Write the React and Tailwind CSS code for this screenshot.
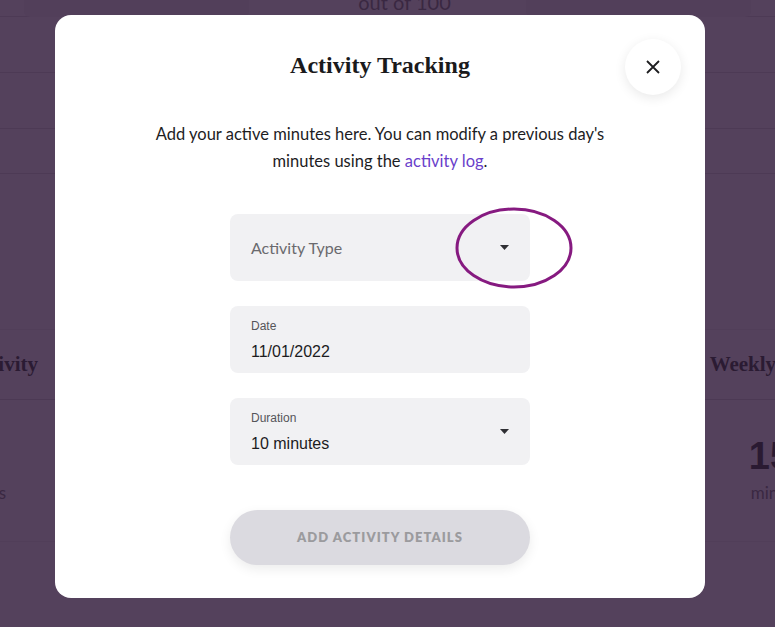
import React from 'react';

const serif = { fontFamily: '"Liberation Serif", serif' };

const Caret = () => (
  <svg width="9" height="5" viewBox="0 0 9 5" className="shrink-0">
    <path d="M0 0h9L4.5 5z" fill="#2f2f33" />
  </svg>
);

const BgCard = ({ title, value, unit }) => (
  <div className="w-[372px] shrink-0 h-[213px] border border-[#513e59] rounded-[10px] flex flex-col">
    <div className="h-[70px] flex items-center justify-center border-b border-[#4c3954]">
      <span className="text-[21px] font-bold text-[#2b1b33]" style={serif}>{title}</span>
    </div>
    <div className="flex flex-col items-center pt-[36px]">
      <span className="text-[38px] leading-[40px] font-semibold text-[#2a1a32]" style={{ fontFamily: '"Liberation Sans", sans-serif' }}>{value}</span>
      <span className="text-[17px] mt-[4px] text-[#3a2842]" style={{ fontFamily: 'Lato, sans-serif' }}>{unit}</span>
    </div>
  </div>
);

const Field = ({ label, value, caret, placeholder, children }) => (
  <div className="relative w-[300px] h-[67px] mx-auto rounded-[8px] bg-[#f1f1f3] flex items-center justify-between pl-[21px] pr-[21px]">
    {placeholder ? (
      <span className="text-[16px] text-[#6a6a6e]" style={{ fontFamily: 'Lato, sans-serif' }}>{placeholder}</span>
    ) : (
      <div className="flex flex-col self-start pt-[13px]" style={{ fontFamily: '"Liberation Sans", Arial, sans-serif' }}>
        <span className="text-[12px] leading-[14px] text-[#555559]">{label}</span>
        <span className="text-[16px] leading-[20px] mt-[9px] text-[#1c1c1e]">{value}</span>
      </div>
    )}
    {caret && <Caret />}
    {children}
  </div>
);

export default function App() {
  return (
    <div className="relative w-full h-[627px] overflow-hidden bg-[#54415c]">
      {/* dashboard behind the overlay */}
      <div className="flex flex-col">
        <div className="h-[17px] border-b border-[#4d3a55] flex justify-center">
          <div className="flex gap-[26px] -mt-[12px]">
            <div className="w-[225px] h-[29px] bg-[#523f5a] rounded-b-[6px]" />
            <div className="w-[225px] h-[29px] flex items-end justify-center pl-[34px] -mb-[4px]">
              <span className="text-[20px] text-[#3a2842]" style={{ fontFamily: 'Lato, sans-serif' }}>out of 100</span>
            </div>
            <div className="w-[225px] h-[29px] bg-[#523f5a] rounded-b-[6px]" />
          </div>
        </div>
        <div className="h-[56px] border-b border-[#4d3a55]" />
        <div className="h-[56px] border-b border-[#4d3a55]" />
        <div className="h-[45px] border-b border-[#4d3a55]" />
        <div className="flex justify-center gap-[30px] mt-[155px] -ml-[18px]">
          <BgCard title="Daily Activity" value="5" unit="minutes" />
          <BgCard title="Monthly Activity" value="10" unit="minutes" />
          <BgCard title="Weekly Activity" value="150" unit="minutes" />
        </div>
      </div>

      {/* modal */}
      <div className="absolute left-[55px] top-[15px] w-[650px] h-[583px] bg-white rounded-[16px] flex flex-col items-center pt-[34px]">
        <button className="absolute top-[24px] right-[24px] w-14 h-14 rounded-full bg-white shadow-[0_3px_12px_rgba(0,0,0,0.09)] flex items-center justify-center">
          <svg width="14" height="14" viewBox="0 0 14 14">
            <path d="M1 1l12 12M13 1L1 13" stroke="#1e1e20" strokeWidth="1.8" />
          </svg>
        </button>

        <h1 className="text-[24px] leading-[32px] font-bold text-[#1a1a1c]" style={serif}>Activity Tracking</h1>

        <p className="mt-[40px] text-center text-[16.5px] leading-[27px] text-[#1d1d1f]" style={{ fontFamily: 'Lato, sans-serif' }}>
          Add your active minutes here. You can modify a previous day's
          <br />
          minutes using the <span className="text-[#6a3fcb]">activity log</span>.
        </p>

        <div className="mt-[39px] w-full flex flex-col gap-[25px]">
          <Field placeholder="Activity Type" caret>
            <svg width="118" height="82" viewBox="0 0 118 82" className="absolute left-[225px] top-[-7px]">
              <ellipse cx="59" cy="41" rx="57" ry="39" fill="none" stroke="#861a80" strokeWidth="3" />
            </svg>
          </Field>
          <Field label="Date" value="11/01/2022" />
          <Field label="Duration" value="10 minutes" caret />
        </div>

        <button className="mt-[45px] w-[300px] h-[55px] rounded-full bg-[#dbdae0] shadow-[0_4px_12px_rgba(0,0,0,0.08)] text-[13px] font-extrabold tracking-[0.08em] text-[#9b9b9e]" style={{ fontFamily: 'Lato, sans-serif' }}>
          ADD ACTIVITY DETAILS
        </button>
      </div>
    </div>
  );
}
